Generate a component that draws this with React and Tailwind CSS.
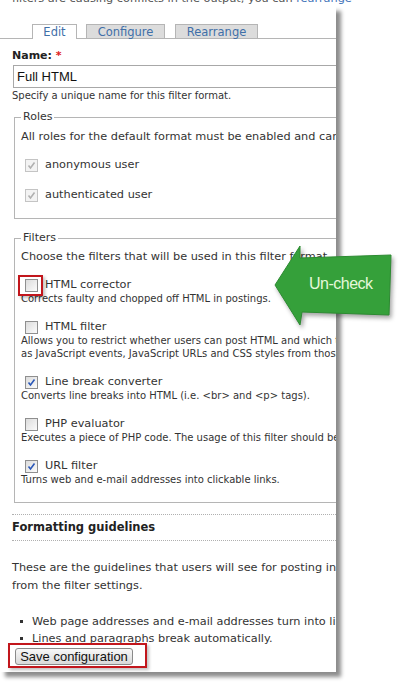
import React from "react";

const Box = ({ checked, disabled }) => (
  <span
    className={`inline-flex w-[13px] h-[13px] shrink-0 items-center justify-center border ${
      disabled
        ? "border-[#c4c4c4] bg-[#f3f3f3]"
        : "border-[#8f8f8f] bg-gradient-to-br from-[#dcdcdc] to-[#fbfbfb]"
    }`}
  >
    {checked && (
      <svg width="9" height="9" viewBox="0 0 9 9">
        <path
          d="M1.5 4.5 L3.5 7 L7.5 1.5"
          fill="none"
          stroke={disabled ? "#b0b0b0" : "#2b58b8"}
          strokeWidth="1.6"
        />
      </svg>
    )}
  </span>
);

const Filter = ({ label, desc, checked, highlight }) => (
  <div className="mt-[15px]">
    <div className="flex items-center h-[14px] pl-[10px]">
      <span className="relative flex shrink-0">
        <Box checked={checked} />
        {highlight && (
          <span className="absolute left-[-7px] top-[-4px] w-[25px] h-[21px] border-2 border-[#c2161c] shadow-[2px_2px_3px_rgba(0,0,0,0.25)]" />
        )}
      </span>
      <span className="ml-[7px] text-[11.3px] text-[#333]">{label}</span>
    </div>
    <div className="pl-[6px] text-[10px] leading-[13px] text-[#333] whitespace-nowrap">
      {desc.map((d) => (
        <div key={d}>{d}</div>
      ))}
    </div>
  </div>
);

export default function App() {
  return (
    <div className="relative w-[408px] h-[690px] bg-white overflow-hidden font-['DejaVu_Sans',sans-serif] text-[#333]">
      {/* cut-off intro line */}
      <div className="h-[6px] overflow-hidden pl-[12px]">
        <p className="-mt-[8px] text-[11.3px] leading-[14px] whitespace-nowrap text-[#555]">
          filters are causing conflicts in the output, you can{" "}
          <span className="text-[#3f73b8]">rearrange</span>
        </p>
      </div>

      {/* page panel */}
      <div className="w-[336px] h-[666px] bg-white shadow-[5px_5px_4px_rgba(0,0,0,0.45)] overflow-hidden pl-[12px]">
        {/* tabs */}
        <div className="mt-[18px] -ml-[12px] w-[336px] flex items-end h-[15px] border-b border-[#b5b5b5] pl-[32px] text-[11.5px] text-[#3f6fa8] leading-[14px]">
          <div className="w-[45px] h-[15px] -mb-px bg-white border border-b-0 border-[#b5b5b5] flex items-center justify-center">
            Edit
          </div>
          <div className="ml-[9px] w-[79px] h-[14px] bg-[#dcdcdc] border border-b-0 border-[#b5b5b5] flex items-center justify-center">
            Configure
          </div>
          <div className="ml-[10px] w-[83px] h-[14px] bg-[#dcdcdc] border border-b-0 border-[#b5b5b5] flex items-center justify-center">
            Rearrange
          </div>
        </div>

        {/* name */}
        <div className="mt-[10px] h-[14px] leading-[14px] text-[11px] font-bold text-[#222]">
          Name: <span className="text-[#e02020]">*</span>
        </div>
        <div className="mt-[2px] ml-[1px] w-[340px] h-[23px] border border-[#a8a8a8] bg-white flex items-center pl-[3px] font-['Liberation_Sans',sans-serif] text-[13px] text-[#111]">
          Full HTML
        </div>
        <div className="mt-[2px] text-[10px] leading-[12px] text-[#333]">
          Specify a unique name for this filter format.
        </div>

        {/* roles */}
        <fieldset className="mt-[9px] ml-[2px] w-[340px] border border-[#b5b5b5] pb-[15px]">
          <legend className="ml-[6px] px-[2px] text-[11px] leading-[12px] text-[#333]">
            Roles
          </legend>
          <div className="mt-[7px] pl-[6px] text-[11.3px] leading-[14px] whitespace-nowrap">
            All roles for the default format must be enabled and cannot be changed.
          </div>
          <div className="mt-[13px] pl-[10px] flex items-center h-[16px]">
            <Box checked disabled />
            <span className="ml-[7px] text-[11.3px]">anonymous user</span>
          </div>
          <div className="mt-[14px] pl-[10px] flex items-center h-[16px]">
            <Box checked disabled />
            <span className="ml-[7px] text-[11.3px]">authenticated user</span>
          </div>
        </fieldset>

        {/* filters */}
        <fieldset className="mt-[13px] ml-[2px] w-[340px] border border-[#b5b5b5] pb-[16px]">
          <legend className="ml-[6px] px-[2px] text-[11px] leading-[12px] text-[#333]">
            Filters
          </legend>
          <div className="mt-[6px] pl-[6px] text-[11.3px] leading-[14px] whitespace-nowrap">
            Choose the filters that will be used in this filter format.
          </div>
          <div className="-mt-[1px]">
            <Filter
              label="HTML corrector"
              highlight
              desc={["Corrects faulty and chopped off HTML in postings."]}
            />
          </div>
          <Filter
            label="HTML filter"
            desc={[
              "Allows you to restrict whether users can post HTML and which tags to filter out. It will also remove harmful content such",
              "as JavaScript events, JavaScript URLs and CSS styles from those tags that are not removed.",
            ]}
          />
          <Filter
            label="Line break converter"
            checked
            desc={["Converts line breaks into HTML (i.e. <br> and <p> tags)."]}
          />
          <Filter
            label="PHP evaluator"
            desc={[
              "Executes a piece of PHP code. The usage of this filter should be restricted to administrators only!",
            ]}
          />
          <Filter
            label="URL filter"
            checked
            desc={["Turns web and e-mail addresses into clickable links."]}
          />
        </fieldset>

        {/* formatting guidelines */}
        <div className="mt-[11px] border-t border-b border-dotted border-[#b0b0b0] h-[27px] flex items-center text-[11.5px] font-bold text-[#222]">
          Formatting guidelines
        </div>
        <div className="mt-[18px] text-[11.3px] leading-[18px] text-[#333] whitespace-nowrap">
          <div>These are the guidelines that users will see for posting in this input format. They are automatically generated</div>
          <div>from the filter settings.</div>
        </div>
        <ul className="mt-[18px] text-[11.3px] leading-[17px] text-[#333] whitespace-nowrap">
          <li className="flex items-center h-[17px]">
            <span className="ml-[8px] w-[3px] h-[3px] shrink-0 bg-[#333]" />
            <span className="ml-[9px]">Web page addresses and e-mail addresses turn into links automatically.</span>
          </li>
          <li className="flex items-center h-[17px]">
            <span className="ml-[8px] w-[3px] h-[3px] shrink-0 bg-[#333]" />
            <span className="ml-[9px]">Lines and paragraphs break automatically.</span>
          </li>
        </ul>

        {/* save */}
        <div className="relative mt-[1px] ml-[3px] w-[118px] h-[17px]">
          <button className="block w-[118px] h-[17px] border border-[#8a8a8a] rounded-[3px] bg-gradient-to-b from-[#f8f8f8] to-[#d9d9d9] font-['Liberation_Sans',sans-serif] text-[13px] leading-[15px] text-[#111]">
            Save configuration
          </button>
          <span className="absolute left-[-7px] top-[-5px] w-[139px] h-[25px] border-2 border-[#c2161c] shadow-[2px_2px_3px_rgba(0,0,0,0.25)]" />
        </div>
      </div>

      {/* green arrow annotation */}
      <svg
        className="absolute left-[268px] top-[240px] drop-shadow-[2px_3px_2px_rgba(0,0,0,0.35)]"
        width="130"
        height="95"
        viewBox="268 240 130 95"
      >
        <polygon
          points="275,285 300,246 300,258 391,255 389,315 302,312 300,325"
          fill="#35a03a"
          stroke="#2c8a31"
          strokeWidth="1"
        />
      </svg>
      <div className="absolute left-[309px] top-[274px] font-['Liberation_Sans',sans-serif] text-[16px] leading-[20px] tracking-[-0.5px] text-[#e6f8da]">
        Un-check
      </div>
    </div>
  );
}
